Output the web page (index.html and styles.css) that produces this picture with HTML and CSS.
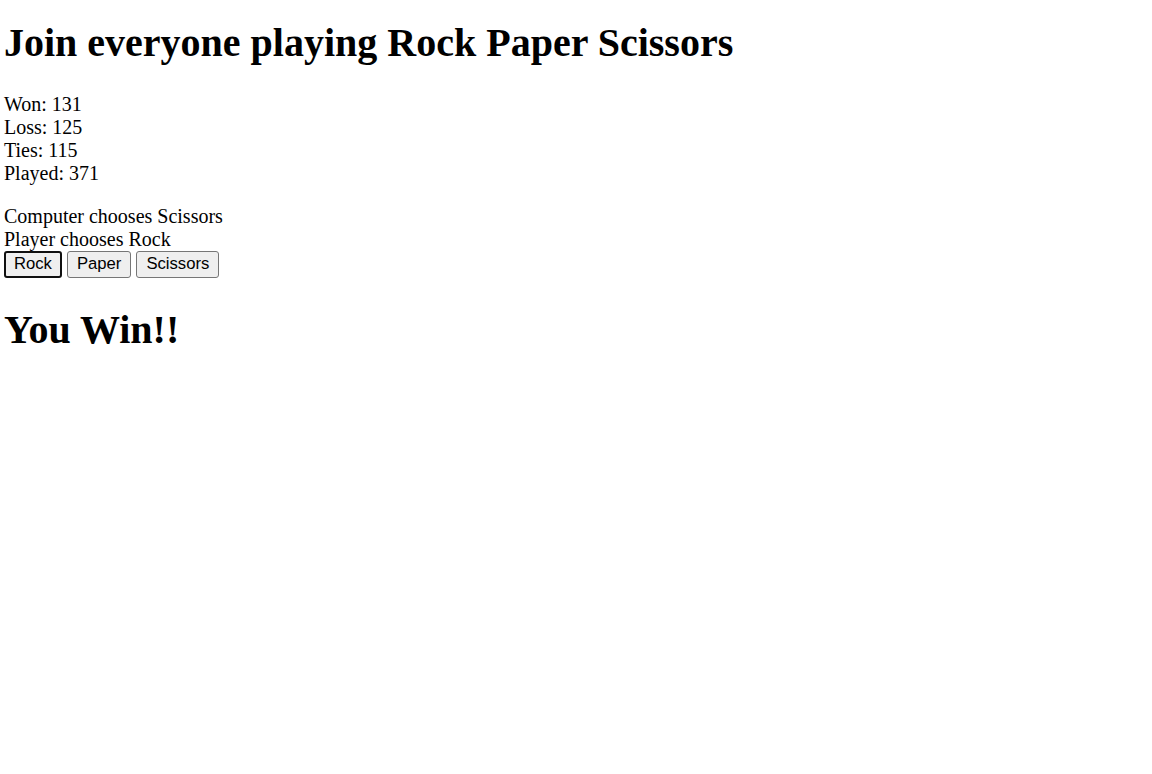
FILE: index.html
```html
<!DOCTYPE html>
<html lang="en">
<head>
<meta charset="utf-8">
<title>Rock Paper Scissors</title>
<link rel="stylesheet" href="styles.css">
</head>
<body>
<h1 class="title">Join everyone playing Rock Paper Scissors</h1>
<div class="stats">
  <div>Won: 131</div>
  <div>Loss: 125</div>
  <div>Ties: 115</div>
  <div>Played: 371</div>
</div>
<div class="choices">
  <div>Computer chooses Scissors</div>
  <div>Player chooses Rock</div>
</div>
<div class="buttons">
  <button class="btn btn-active">Rock</button>
  <button class="btn">Paper</button>
  <button class="btn">Scissors</button>
</div>
<h1 class="result">You Win!!</h1>
</body>
</html>
```
FILE: styles.css
```css
html, body {
  background: #ffffff;
}
body {
  margin: 0;
  padding: 0 4px;
  font-family: "Liberation Serif", "Times New Roman", serif;
  font-size: 20px;
  line-height: 23px;
  color: #000000;
}
.title, .result {
  font-size: 40px;
  line-height: 46px;
  font-weight: bold;
  margin: 0;
}
.title {
  padding-top: 20px;
  margin-bottom: 26.5px;
}
.stats {
  margin-bottom: 20px;
}
.buttons {
  display: flex;
  gap: 5px;
  align-items: flex-start;
  padding-top: 0;
  padding-bottom: 2px;
}
.btn {
  font-family: "Liberation Sans", Arial, sans-serif;
  font-size: 16.67px;
  line-height: 21px;
  padding: 1px 9px 3px;
  margin: 0;
  color: #000000;
  background: #efefef;
  border: 1px solid #767676;
  border-radius: 3px;
}
.btn-active {
  border: 2px solid #101010;
  padding: 0 8px 2px;
}
.result {
  margin-top: 27px;
}
```
